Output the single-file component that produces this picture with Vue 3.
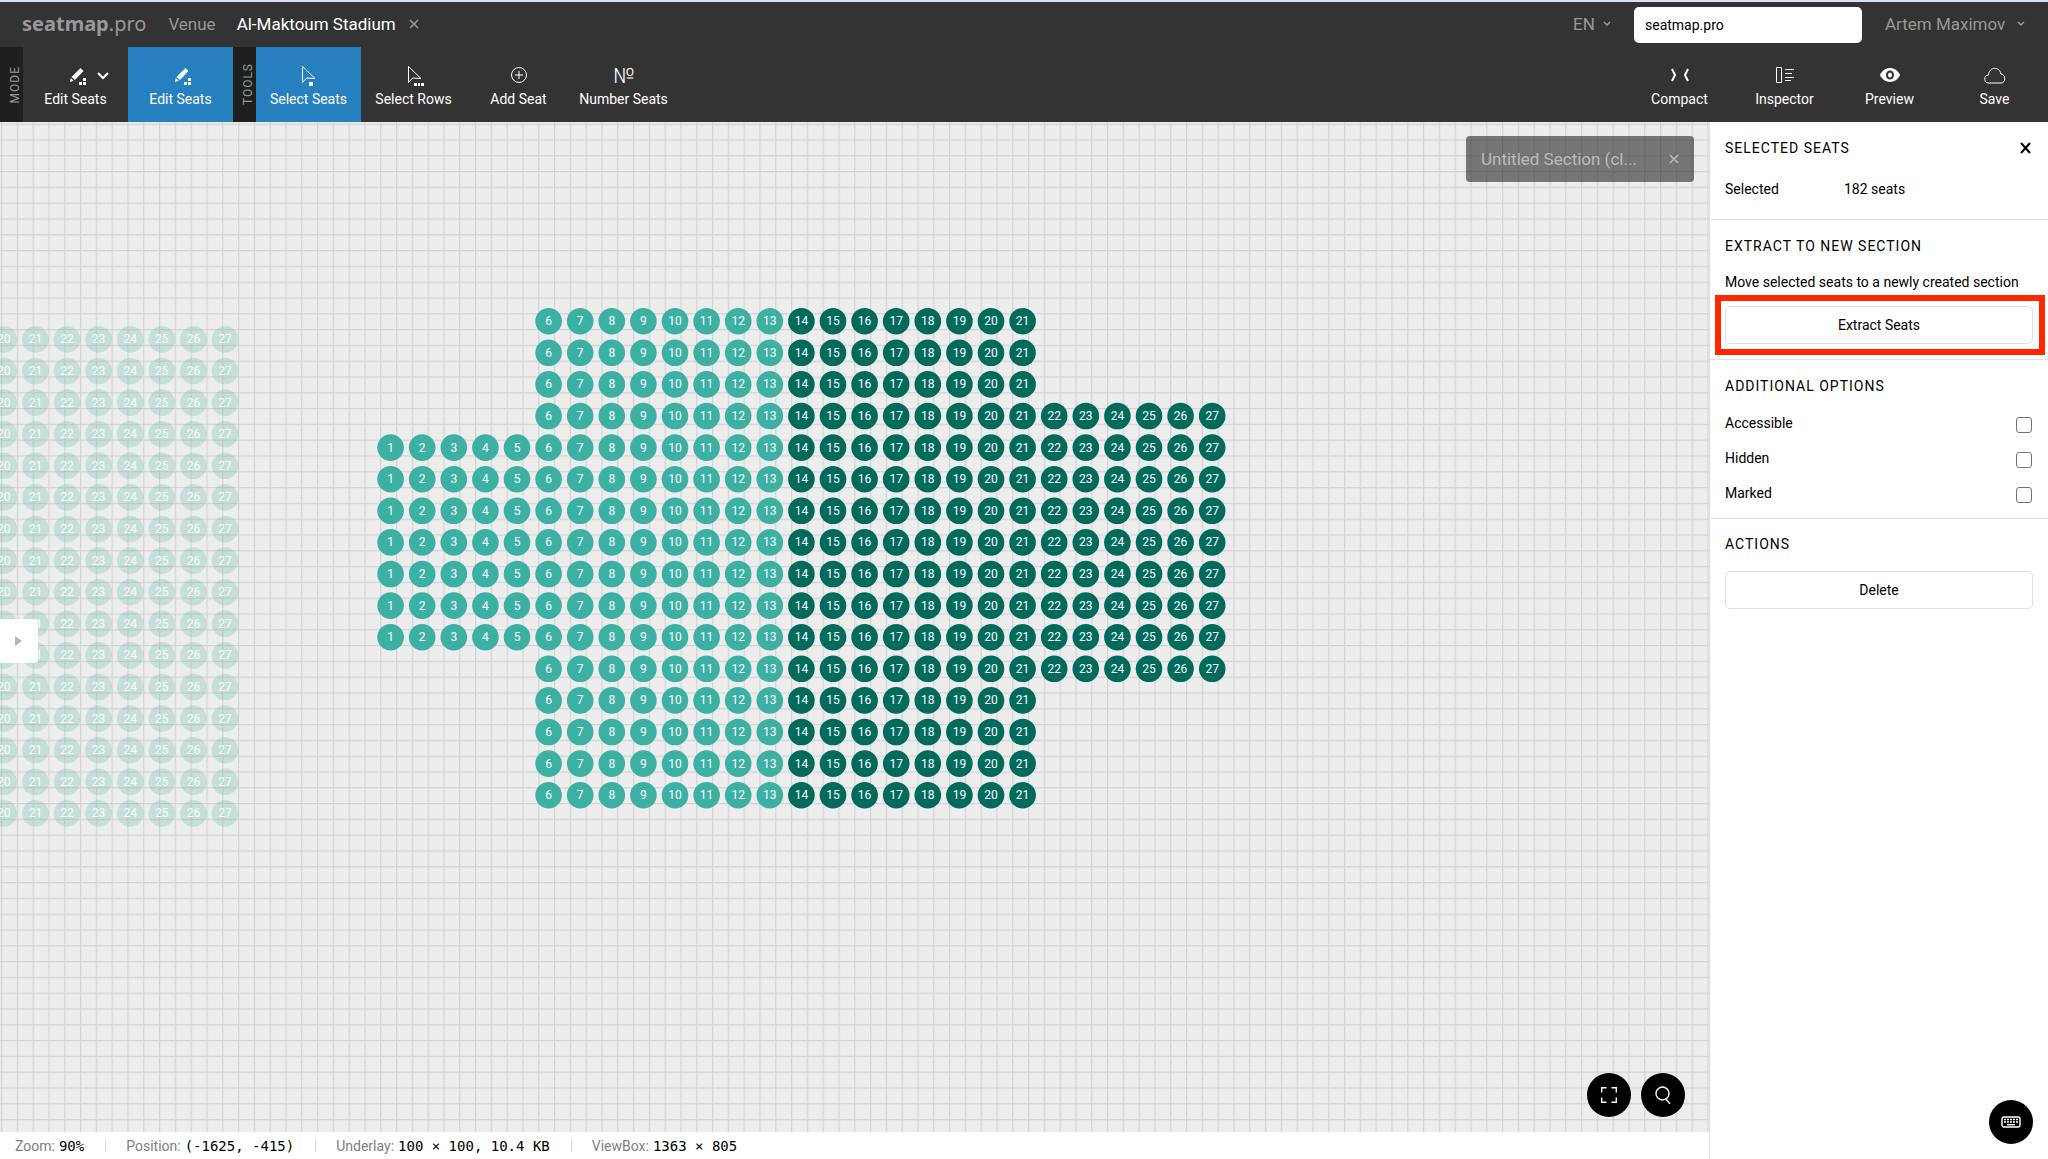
<script setup>
import { ref } from 'vue'

const PITCH = 31.6
const range = (from, to) => Array.from({ length: to - from + 1 }, (_, i) => from + i)

function buildSeats(originX, originY, rows) {
  return rows.flatMap(([from, to], r) =>
    range(from, to).map((n) => ({
      key: `${r}-${n}`,
      n,
      x: originX + (n - 1) * PITCH,
      y: originY + r * PITCH,
      dark: n > 13,
    })),
  )
}

const activeRows = [
  ...Array(3).fill([6, 21]),
  [6, 27],
  ...Array(7).fill([1, 27]),
  [6, 27],
  ...Array(4).fill([6, 21]),
]
const seats = buildSeats(390.6, 199.2, activeRows)
const fadedSeats = buildSeats(-596.6, 217.4, Array(16).fill([20, 27]))

const tools = [
  { id: 'seats', label: 'Select Seats' },
  { id: 'rows', label: 'Select Rows' },
  { id: 'add', label: 'Add Seat' },
  { id: 'number', label: 'Number Seats' },
]
const activeTool = ref('seats')

const account = ref('seatmap.pro')
const options = ref([
  { id: 'accessible', label: 'Accessible', on: false },
  { id: 'hidden', label: 'Hidden', on: false },
  { id: 'marked', label: 'Marked', on: false },
])

const status = [
  { label: 'Zoom:', value: '90%' },
  { label: 'Position:', value: '(-1625, -415)' },
  { label: 'Underlay:', value: '100 × 100, 10.4 KB' },
  { label: 'ViewBox:', value: '1363 × 805' },
]
</script>

<template>
  <div class="app">
    <header class="topbar">
      <a class="logo" href="#"><b>seatmap</b>.pro</a>
      <a class="crumb" href="#">Venue</a>
      <span class="venue">Al-Maktoum Stadium</span>
      <button class="icon-btn close-venue" aria-label="Close venue">
        <svg width="10" height="10" viewBox="0 0 10 10"><path d="M1 1l8 8M9 1l-8 8" /></svg>
      </button>
      <div class="spacer"></div>
      <label class="lang">
        <select aria-label="Language"><option>EN</option></select>
        <svg width="8" height="6" viewBox="0 0 8 6"><path d="M1 1l3 3 3-3" /></svg>
      </label>
      <input v-model="account" class="account" type="text" aria-label="Organization" />
      <button class="user">
        Artem Maximov
        <svg width="8" height="6" viewBox="0 0 8 6"><path d="M1 1l3 3 3-3" /></svg>
      </button>
    </header>

    <nav class="toolbar">
      <div class="group"><span>MODE</span></div>
      <button class="tool">
        <svg class="icon" width="24" height="24" viewBox="0 0 24 24">
          <path class="fill" d="M16.500 4L19.500 7 11 16 7.500 13zM6.700 14l3 2.700L6 18z" />
          <path class="fill" d="M19 14h3v3h-3zM19 18h3v3h-3zM15 18h3v3h-3z" />
        </svg>
        Edit Seats
        <svg class="more" width="12" height="8" viewBox="0 0 12 8"><path d="M1 1l5 5 5-5" /></svg>
      </button>
      <button class="tool active">
        <svg class="icon" width="24" height="24" viewBox="0 0 24 24">
          <path class="fill" d="M16.500 4L19.500 7 11 16 7.500 13zM6.700 14l3 2.700L6 18z" />
          <path class="fill" d="M19 14h3v3h-3zM19 18h3v3h-3zM15 18h3v3h-3z" />
        </svg>
        Edit Seats
      </button>
      <div class="group"><span>TOOLS</span></div>
      <button
        v-for="t in tools"
        :key="t.id"
        class="tool"
        :class="{ active: t.id === activeTool }"
        @click="activeTool = t.id"
      >
        <svg class="icon" width="24" height="24" viewBox="0 0 24 24">
          <template v-if="t.id === 'seats'">
            <path d="M5.500 2.500v16l4-4.500 8.500.500z" />
            <path class="fill" d="M12 18h4v4h-4z" />
          </template>
          <template v-else-if="t.id === 'rows'">
            <path d="M6.500 2.500v16l4-4.500 8.500.500z" />
            <path class="fill" d="M12 19h3v3h-3zM16 19h2v3h-2zM19 19h3v3h-3z" />
          </template>
          <template v-else-if="t.id === 'add'">
            <circle cx="12" cy="11" r="7.500" />
            <path d="M12 7v8M8 11h8" />
          </template>
          <text v-else x="12" y="19" text-anchor="middle">№</text>
        </svg>
        {{ t.label }}
      </button>
      <div class="spacer"></div>
      <button class="tool">
        <svg class="icon bold" width="24" height="24" viewBox="0 0 24 24">
          <path d="M4 5l3 6-3 6M20 5l-3 6 3 6" />
        </svg>
        Compact
      </button>
      <button class="tool">
        <svg class="icon" width="24" height="24" viewBox="0 0 24 24">
          <path d="M3.500 3.500h5v15h-5zM12 5.500h9M12 9.500h7M12 13.500h9M12 16.500h6" />
        </svg>
        Inspector
      </button>
      <button class="tool">
        <svg class="icon" width="24" height="24" viewBox="0 0 24 24">
          <path class="fill" d="M2 11C6 1.700 18 1.700 22 11 18 20.300 6 20.300 2 11z" />
          <ellipse class="pupil" cx="12" cy="11" rx="3" ry="3.500" />
        </svg>
        Preview
      </button>
      <button class="tool">
        <svg class="icon" width="24" height="24" viewBox="0 0 24 24">
          <path d="M6 19a4 4 0 0 1-.500-8C6 2.500 16.500 2 18 10c5 .500 5 9 0 9z" />
        </svg>
        Save
      </button>
    </nav>

    <div class="workspace">
      <main class="main">
        <div class="stage">
          <svg class="canvas" width="100%" height="100%">
            <defs>
              <pattern id="grid" x="1" y="1.600" width="15.800" height="15.800" patternUnits="userSpaceOnUse">
                <path class="grid-line" d="M0 .600h15.800M.600 0v15.800" />
              </pattern>
            </defs>
            <g class="faded">
              <circle v-for="s in fadedSeats" :key="s.key" :cx="s.x" :cy="s.y" r="13.300" />
            </g>
            <rect width="100%" height="100%" fill="url(#grid)" />
            <g class="faded">
              <text v-for="s in fadedSeats" :key="s.key" :x="s.x" :y="s.y + 4">{{ s.n }}</text>
            </g>
            <g v-for="s in seats" :key="s.key" class="seat" :class="{ dark: s.dark }">
              <circle :cx="s.x" :cy="s.y" r="13.300" />
              <text :x="s.x" :y="s.y + 4">{{ s.n }}</text>
            </g>
          </svg>

          <div class="section-tag">
            <span>Untitled Section (cl...</span>
            <button class="icon-btn" aria-label="Close section">
              <svg width="10" height="10" viewBox="0 0 10 10"><path d="M1 1l8 8M9 1l-8 8" /></svg>
            </button>
          </div>

          <button class="drawer" aria-label="Open drawer">
            <svg width="8" height="10" viewBox="0 0 8 10"><path d="M0 0l7 5-7 5z" /></svg>
          </button>

          <div class="view-tools">
            <button class="round" aria-label="Fit to screen">
              <svg width="16" height="16" viewBox="0 0 16 16">
                <path d="M.700 5.500V.700h4.800M10.500.700h4.800v4.800M15.300 10.500v4.800h-4.800M5.500 15.300H.700v-4.800" />
              </svg>
            </button>
            <button class="round" aria-label="Search">
              <svg width="18" height="18" viewBox="0 0 18 18">
                <circle cx="8.500" cy="7.500" r="6.500" /><path d="M12 13l4 5" />
              </svg>
            </button>
          </div>
        </div>

        <footer class="status">
          <div v-for="s in status" :key="s.label" class="status-item">
            <span>{{ s.label }}</span><code>{{ s.value }}</code>
          </div>
        </footer>
      </main>

      <aside class="panel">
        <section class="block selection">
          <div class="title-row">
            <h2>SELECTED SEATS</h2>
            <button class="icon-btn" aria-label="Close panel">
              <svg width="12" height="12" viewBox="0 0 12 12"><path d="M1 1l9 10M10 1l-9 10" /></svg>
            </button>
          </div>
          <dl class="info">
            <dt>Selected</dt>
            <dd>182 seats</dd>
          </dl>
        </section>

        <section class="block extract">
          <h2>EXTRACT TO NEW SECTION</h2>
          <p>Move selected seats to a newly created section</p>
          <div class="highlight"><button class="action">Extract Seats</button></div>
        </section>

        <section class="block options">
          <h2>ADDITIONAL OPTIONS</h2>
          <label v-for="o in options" :key="o.id" class="option">
            <span>{{ o.label }}</span>
            <input v-model="o.on" type="checkbox" />
          </label>
        </section>

        <section class="block actions">
          <h2>ACTIONS</h2>
          <button class="action">Delete</button>
        </section>

        <button class="round keyboard" aria-label="Keyboard shortcuts">
          <svg width="20" height="12" viewBox="0 0 20 12">
            <rect x="1" y="1" width="18" height="10" rx="2" />
            <path class="keys" d="M3 3.500h14M3 6h14" />
            <path d="M6 8.700h8" />
          </svg>
        </button>
      </aside>
    </div>
  </div>
</template>

<style>
body {
  margin: 0;
}
</style>

<style scoped>
.app {
  display: flex;
  flex-direction: column;
  min-height: 100vh;
  box-sizing: border-box;
  border-top: 2px solid #d9e1ee;
  font: 14px/20px Roboto, "Liberation Sans", sans-serif;
  color: #000;
  background: #fff;
}
button,
input,
select {
  font: inherit;
  color: inherit;
  box-sizing: border-box;
}
button {
  padding: 0;
  border: 0;
  background: none;
  cursor: pointer;
}
svg {
  display: block;
  fill: none;
  stroke: currentColor;
}
.spacer {
  flex: 1;
}
.icon-btn svg {
  stroke-width: 2;
}

.topbar {
  display: flex;
  align-items: center;
  height: 45px;
  padding: 0 23px 2px 22px;
  box-sizing: border-box;
  background: #333;
  color: #999;
  font-size: 17px;
}
.topbar a {
  color: inherit;
  text-decoration: none;
}
.topbar svg {
  stroke-width: 1.5;
}
.logo {
  font: 20px/24px "Noto Sans", sans-serif;
}
.crumb {
  margin-left: 22px;
}
.venue {
  margin: 0 13px 0 21px;
  color: #fff;
}
.lang {
  display: flex;
  align-items: center;
  gap: 6px;
  margin-right: 23px;
}
.lang select {
  appearance: none;
  width: 24px;
  padding: 0;
  border: 0;
  background: none;
}
.account {
  width: 228px;
  height: 36px;
  margin: 2px 23px 0 0;
  padding: 0 11px;
  border: 0;
  border-radius: 5px;
  background: #fff;
  color: #000;
  font-size: 14px;
}
.user {
  display: flex;
  align-items: center;
  justify-content: space-between;
  width: 140px;
}

.toolbar {
  display: flex;
  height: 75px;
  padding-right: 1px;
  background: #333;
  color: #fff;
}
.group {
  display: flex;
  align-items: center;
  justify-content: center;
  width: 23px;
  padding-left: 6px;
  box-sizing: border-box;
  background: #1f1f1f;
  color: #999;
  font-size: 12px;
  letter-spacing: 1px;
}
.group span {
  writing-mode: vertical-rl;
  transform: rotate(180deg);
}
.tool {
  position: relative;
  display: flex;
  flex-direction: column;
  align-items: center;
  width: 105px;
  padding-top: 17px;
  gap: 1px;
}
.tool.active {
  background: #2680c0;
}
.icon .fill {
  fill: currentColor;
  stroke: none;
}
.icon.bold {
  stroke-width: 2;
}
.icon text {
  fill: currentColor;
  stroke: none;
  font-size: 21px;
  font-weight: 300;
}
.pupil {
  stroke: #333;
  stroke-width: 2;
}
.more {
  position: absolute;
  top: 25px;
  left: 74px;
  stroke-width: 2;
}

.workspace {
  display: flex;
  flex: 1;
}
.main {
  display: flex;
  flex: 1;
  flex-direction: column;
  min-width: 0;
}
.stage {
  position: relative;
  flex: 1;
  overflow: hidden;
  background: #ededed;
}
.canvas {
  position: absolute;
  inset: 0;
  stroke: none;
}
.grid-line {
  stroke: #9a9a9a;
  stroke-opacity: 0.3;
  stroke-width: 1.2;
}
.canvas text {
  fill: #fff;
  font-size: 12px;
  text-anchor: middle;
}
.faded circle {
  fill: #c5e0da;
}
.canvas .faded text {
  fill: #f8fcfb;
}
.seat circle {
  fill: #3cb1a3;
}
.seat.dark circle {
  fill: #006b5c;
}
.section-tag {
  position: absolute;
  top: 14px;
  right: 15px;
  display: flex;
  align-items: center;
  justify-content: space-between;
  width: 228px;
  height: 46px;
  padding: 0 15px;
  box-sizing: border-box;
  border-radius: 4px;
  background: rgba(0, 0, 0, 0.5);
  color: #bbb;
  font-size: 17px;
}
.section-tag svg {
  stroke-width: 1.5;
}
.drawer {
  position: absolute;
  top: 497px;
  left: 0;
  width: 38px;
  height: 44px;
  padding-left: 15px;
  border-radius: 0 4px 4px 0;
  background: #fff;
}
.drawer svg {
  fill: #b5b5b5;
  stroke: none;
}
.view-tools {
  position: absolute;
  right: 24px;
  bottom: 15px;
  display: flex;
  gap: 10px;
}
.round {
  display: flex;
  align-items: center;
  justify-content: center;
  width: 44px;
  height: 44px;
  border-radius: 50%;
  background: #000;
  color: #fff;
}
.round svg {
  stroke-width: 1.4;
}
.keyboard {
  position: absolute;
  right: 15px;
  bottom: 15px;
}
.keys {
  stroke-dasharray: 2 1;
}

.status {
  display: flex;
  align-items: center;
  height: 27px;
  padding-left: 15px;
  color: #808080;
}
.status-item {
  display: flex;
  align-items: center;
  gap: 4px;
}
.status-item + .status-item {
  margin-left: 21px;
  padding-left: 21px;
  background: linear-gradient(#ddd, #ddd) left center / 1px 12px no-repeat;
}
.status code {
  font: 14px/20px "DejaVu Sans Mono", monospace;
  color: #000;
}

.panel {
  position: relative;
  width: 339px;
  box-sizing: border-box;
  border-left: 1px solid #e0e0e0;
}
.block {
  padding: 16px 15px;
  border-bottom: 1px solid #e0e0e0;
}
.block h2 {
  margin: 0;
  font-size: 14px;
  font-weight: 400;
  letter-spacing: 1px;
}
.block.selection {
  padding-bottom: 20px;
}
.title-row {
  display: flex;
  align-items: center;
  justify-content: space-between;
  padding-right: 1px;
}
.info {
  display: flex;
  margin: 21px 0 0;
}
.info dt {
  width: 119px;
}
.info dd {
  margin: 0;
}
.extract p {
  margin: 16px 0 3px;
}
.block.extract {
  padding-bottom: 4px;
}
.highlight {
  margin: 0 -12px 0 -10px;
  padding: 5px 6px 5px 4px;
  border: 6px solid #ff2600;
}
.action {
  display: block;
  width: 100%;
  height: 38px;
  border: 1px solid #e0e0e0;
  border-radius: 5px;
  background: #fff;
}
.block.options {
  padding-bottom: 8px;
}
.options h2 {
  margin-bottom: 9px;
}
.option {
  display: flex;
  align-items: center;
  justify-content: space-between;
  height: 35px;
}
.option input {
  appearance: none;
  width: 16px;
  height: 16px;
  margin: 4px 1px 0 0;
  border: 1px solid #767676;
  border-radius: 3px;
  background: #fff;
}
.block.actions {
  padding-top: 15px;
  border-bottom: 0;
}
.actions h2 {
  margin-bottom: 17px;
}
</style>
